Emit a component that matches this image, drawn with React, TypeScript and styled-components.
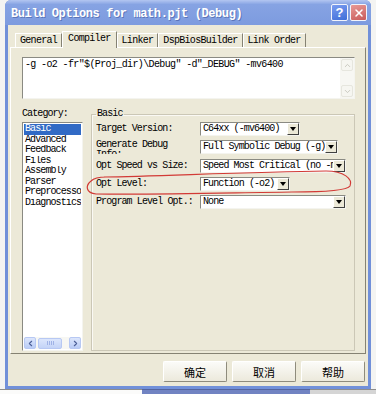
import styled, { createGlobalStyle } from "styled-components"
import { ChevronLeft, ChevronRight, ChevronUp, ChevronDown, X } from "lucide-react"

const mono = `"Liberation Mono", "DejaVu Sans Mono", monospace`

// Styles
const GlobalStyle = createGlobalStyle`
  html, body { margin: 0; padding: 0; background: #f4f4f2; }
  #root { width: 376px; height: 394px; }
`
const Page = styled.div`
  position: relative;
  width: 376px;
  height: 394px;
  overflow: hidden;
  background: #f4f4f2;
  display: flex;
  flex-direction: column;
`
const Window = styled.div`
  margin-left: 5px;
  width: 366px;
  height: 389px;
  display: flex;
  flex-direction: column;
  background: #7190d9;
  border-radius: 6px 6px 0 0;
  box-sizing: border-box;
`
const TitleBar = styled.div`
  height: 25px;
  display: flex;
  align-items: center;
  gap: 2px;
  padding: 0 4px 0 6px;
  border-radius: 6px 6px 0 0;
  background: linear-gradient(180deg, #b3c6f1 0%, #86a3e3 18%, #7d9bdf 100%);
`
const Title = styled.div`
  flex: 1;
  margin-top: 2px;
  color: #fff;
  font: bold 12px ${mono};
  letter-spacing: -0.4px;
  white-space: nowrap;
  text-shadow: 1px 1px 0 rgba(20, 40, 110, 0.35);
`
const CaptionButton = styled.div<{ $kind: "help" | "close" }>`
  width: 15px;
  height: 15px;
  border: 1px solid #f2f4fb;
  border-radius: 2px;
  display: flex;
  align-items: center;
  justify-content: center;
  color: #fff;
  font: bold 13px "Liberation Sans", sans-serif;
  background: ${p => p.$kind === "help"
    ? "linear-gradient(160deg, #7a9cf0, #3f6ed8)"
    : "linear-gradient(160deg, #e89a96, #c95a5a)"};
`
const Body = styled.div`
  flex: 1;
  margin: 0 3px 3px;
  padding: 0 2px 4px;
  background: #ece9d8;
  display: flex;
  flex-direction: column;
`
const TabStrip = styled.div`
  height: 22px;
  display: flex;
  align-items: flex-end;
  padding-left: 5px;
`
const Tab = styled.div<{ $active?: boolean }>`
  position: relative;
  z-index: ${p => p.$active ? 1 : 0};
  height: ${p => p.$active ? "17px" : "14px"};
  margin-bottom: ${p => p.$active ? "-1px" : "0"};
  padding: 0 ${p => p.$active ? "5px" : "4px"} ${p => p.$active ? "3px" : "0"};
  display: flex;
  align-items: center;
  box-sizing: border-box;
  background: #ece9d8;
  border-top: 1px solid #fff;
  border-left: 1px solid #fff;
  border-right: 1px solid #858273;
  font: 10px ${mono};
  letter-spacing: -0.7px;
  color: #000;
  white-space: nowrap;
`
const Panel = styled.div`
  height: 307px;
  box-sizing: border-box;
  border: 1px solid;
  border-color: #fff #858273 #858273 #fff;
  padding: 9px 10px 2px 11px;
  display: flex;
  flex-direction: column;
`
const Sunken = styled.div`
  background: #fff;
  border: 1px solid;
  border-color: #8a8a82 #f4f4ef #f4f4ef #8a8a82;
  box-sizing: border-box;
`
const CommandBox = styled(Sunken)`
  height: 42px;
  display: flex;
`
const CmdText = styled.div`
  flex: 1;
  padding: 1px 2px;
  font: 10px ${mono};
  letter-spacing: -0.63px;
  line-height: 12px;
  white-space: nowrap;
  overflow: hidden;
`
const VScroll = styled.div`
  width: 12px;
  padding: 1px;
  background: #f7f7f3;
  display: flex;
  flex-direction: column;
  justify-content: space-between;
`
const ScrollBtn = styled.div<{ $disabled?: boolean }>`
  width: 12px;
  height: 12px;
  box-sizing: border-box;
  display: flex;
  align-items: center;
  justify-content: center;
  border: 1px solid ${p => p.$disabled ? "#e6e6de" : "#b7c8f3"};
  border-radius: 2px;
  background: ${p => p.$disabled ? "#f6f6f1" : "linear-gradient(180deg, #dce6fc, #b9ccf6)"};
  color: ${p => p.$disabled ? "#c6c6bd" : "#4c5f97"};
`
const LowerRow = styled.div`
  flex: 1;
  margin-top: 9px;
  display: flex;
  gap: 8px;
`
const CategoryCol = styled.div`
  width: 61px;
  display: flex;
  flex-direction: column;
`
const Label = styled.div`
  font: 10px ${mono};
  letter-spacing: -0.9px;
  line-height: 12px;
  color: #000;
  white-space: nowrap;
`
const CatLabel = styled(Label)`
  margin-bottom: 2px;
`
const ListBox = styled(Sunken)`
  flex: 1;
  padding: 1px;
  display: flex;
  flex-direction: column;
  overflow: hidden;
`
const ListItem = styled.div<{ $selected?: boolean }>`
  font: 10px ${mono};
  letter-spacing: -0.9px;
  line-height: 10.5px;
  padding-left: 1px;
  white-space: nowrap;
  overflow: hidden;
  color: ${p => p.$selected ? "#fff" : "#000"};
  background: ${p => p.$selected ? "#316ac5" : "transparent"};
`
const HScroll = styled.div`
  margin-top: auto;
  height: 12px;
  display: flex;
  align-items: center;
  gap: 2px;
  background: #f7f7f3;
`
const Thumb = styled.div`
  width: 24px;
  height: 11px;
  box-sizing: border-box;
  border: 1px solid #b7c8f3;
  border-radius: 2px;
  background: linear-gradient(180deg, #dce6fc, #c3d3f7);
  display: flex;
  align-items: center;
  justify-content: center;
  gap: 1px;
`
const Grip = styled.span`
  width: 1px;
  height: 4px;
  background: #9fb2e6;
`
const GroupBox = styled.fieldset`
  flex: 1;
  min-width: 0;
  margin: 0;
  padding: 2px 0 0 4px;
  border: 1px solid #cbc7b6;
  box-shadow: inset 1px 1px 0 #faf9f4;
`
const Legend = styled.legend`
  padding: 0 1px;
  font: 10px ${mono};
  letter-spacing: -0.9px;
  line-height: 12px;
`
const Rows = styled.div`
  display: flex;
  flex-direction: column;
  gap: 4.3px;
`
const Row = styled.div`
  height: 14px;
  display: flex;
  align-items: center;
`
const RowLabel = styled(Label)<{ $multi?: boolean }>`
  width: 104px;
  flex: none;
  align-self: ${p => p.$multi ? "flex-start" : "center"};
  line-height: ${p => p.$multi ? "10px" : "12px"};
  height: ${p => p.$multi ? "14px" : "auto"};
  overflow: hidden;
`
const Combo = styled(Sunken)<{ $w: number }>`
  width: ${p => p.$w}px;
  height: 14px;
  display: flex;
  align-items: center;
`
const ComboText = styled.div`
  flex: 1;
  padding-left: 2px;
  font: 10px ${mono};
  letter-spacing: -0.9px;
  line-height: 12px;
  white-space: nowrap;
  overflow: hidden;
`
const DropBtn = styled.div`
  width: 12px;
  height: 12px;
  flex: none;
  box-sizing: border-box;
  background: #ece9d8;
  border: 1px solid;
  border-color: #fff #404040 #404040 #fff;
  display: flex;
  align-items: center;
  justify-content: center;
`
const Arrow = styled.span`
  width: 0;
  height: 0;
  border-left: 3.5px solid transparent;
  border-right: 3.5px solid transparent;
  border-top: 4px solid #000;
`
const ButtonRow = styled.div`
  margin-top: 7px;
  padding-right: 1px;
  display: flex;
  justify-content: flex-end;
  gap: 5px;
`
const DlgButton = styled.div`
  width: 64px;
  height: 21px;
  box-sizing: border-box;
  display: flex;
  align-items: center;
  justify-content: center;
  font: 11px "Noto Sans CJK SC", sans-serif;
  color: #000;
  border: 1px solid;
  border-color: #fff #8e8b7c #8e8b7c #fff;
  border-radius: 2px;
  background: linear-gradient(180deg, #fbfbf8, #ece9dc);
`
const BottomStrip = styled.div`
  flex: 1;
  display: flex;
`
const StripPart = styled.div<{ $w: number; $bg: string; $line?: string }>`
  width: ${p => p.$w}px;
  background: ${p => p.$bg};
  border-top: 1px solid ${p => p.$line || p.$bg};
  flex: ${p => p.$w === 0 ? 1 : "none"};
`
const Annotation = styled.svg`
  position: absolute;
  left: 0;
  top: 0;
  pointer-events: none;
`

const tabs = ["General", "Compiler", "Linker", "DspBiosBuilder", "Link Order"]
const categories = ["Basic", "Advanced", "Feedback", "Files", "Assembly", "Parser", "Preprocessor", "Diagnostics"]

const options = [
  { label: "Target Version:", value: "C64xx (-mv6400)", w: 100 },
  { label: "Generate Debug\nInfo:", value: "Full Symbolic Debug (-g)", w: 138 },
  { label: "Opt Speed vs Size:", value: "Speed Most Critical (no -ms)", w: 146 },
  { label: "Opt Level:", value: "Function (-o2)", w: 90 },
  { label: "Program Level Opt.:", value: "None", w: 146 },
]

const App: React.FC = () => {
  return (
    <Page>
      <GlobalStyle />
      <Window>
        <TitleBar>
          <Title>Build Options for math.pjt (Debug)</Title>
          <CaptionButton $kind="help">?</CaptionButton>
          <CaptionButton $kind="close"><X size={12} strokeWidth={3} /></CaptionButton>
        </TitleBar>
        <Body>
          <TabStrip>
            {tabs.map(t => <Tab key={t} $active={t === "Compiler"}>{t}</Tab>)}
          </TabStrip>
          <Panel>
            <CommandBox>
              <CmdText>-g -o2 -fr"$(Proj_dir)\Debug" -d"_DEBUG" -mv6400</CmdText>
              <VScroll>
                <ScrollBtn $disabled><ChevronUp size={9} strokeWidth={2.5} /></ScrollBtn>
                <ScrollBtn $disabled><ChevronDown size={9} strokeWidth={2.5} /></ScrollBtn>
              </VScroll>
            </CommandBox>
            <LowerRow>
              <CategoryCol>
                <CatLabel>Category:</CatLabel>
                <ListBox>
                  {categories.map(c => <ListItem key={c} $selected={c === "Basic"}>{c}</ListItem>)}
                  <HScroll>
                    <ScrollBtn><ChevronLeft size={9} strokeWidth={3} /></ScrollBtn>
                    <Thumb><Grip /><Grip /><Grip /><Grip /></Thumb>
                    <span style={{ flex: 1 }} />
                    <ScrollBtn><ChevronRight size={9} strokeWidth={3} /></ScrollBtn>
                  </HScroll>
                </ListBox>
              </CategoryCol>
              <GroupBox>
                <Legend>Basic</Legend>
                <Rows>
                  {options.map(o => {
                    const lines = o.label.split("\n")
                    return (
                      <Row key={o.label}>
                        <RowLabel $multi={lines.length > 1}>
                          {lines.map((l, i) => <div key={i}>{l}</div>)}
                        </RowLabel>
                        <Combo $w={o.w}>
                          <ComboText>{o.value}</ComboText>
                          <DropBtn><Arrow /></DropBtn>
                        </Combo>
                      </Row>
                    )
                  })}
                </Rows>
              </GroupBox>
            </LowerRow>
          </Panel>
          <ButtonRow>
            <DlgButton>确定</DlgButton>
            <DlgButton>取消</DlgButton>
            <DlgButton>帮助</DlgButton>
          </ButtonRow>
        </Body>
      </Window>
      <BottomStrip>
        <StripPart $w={142} $bg="#fbfbfa" $line="#8d8d8d" />
        <StripPart $w={168} $bg="#7183c2" $line="#55659e" />
        <StripPart $w={0} $bg="#d5d5d5" $line="#8d8d8d" />
      </BottomStrip>
      <Annotation width="376" height="394" viewBox="0 0 376 394">
        <path
          d="M104 177 C160 176 250 172 326 171 C344 171 353 179 350 186 C347 191 322 192 292 192 C222 193 150 195 96 194 C86 193 85 186 91 181 C94 178 99 177 106 177"
          fill="none"
          stroke="#d23a36"
          strokeWidth="1.2"
          strokeLinecap="round"
        />
      </Annotation>
    </Page>
  )
}

export default App
